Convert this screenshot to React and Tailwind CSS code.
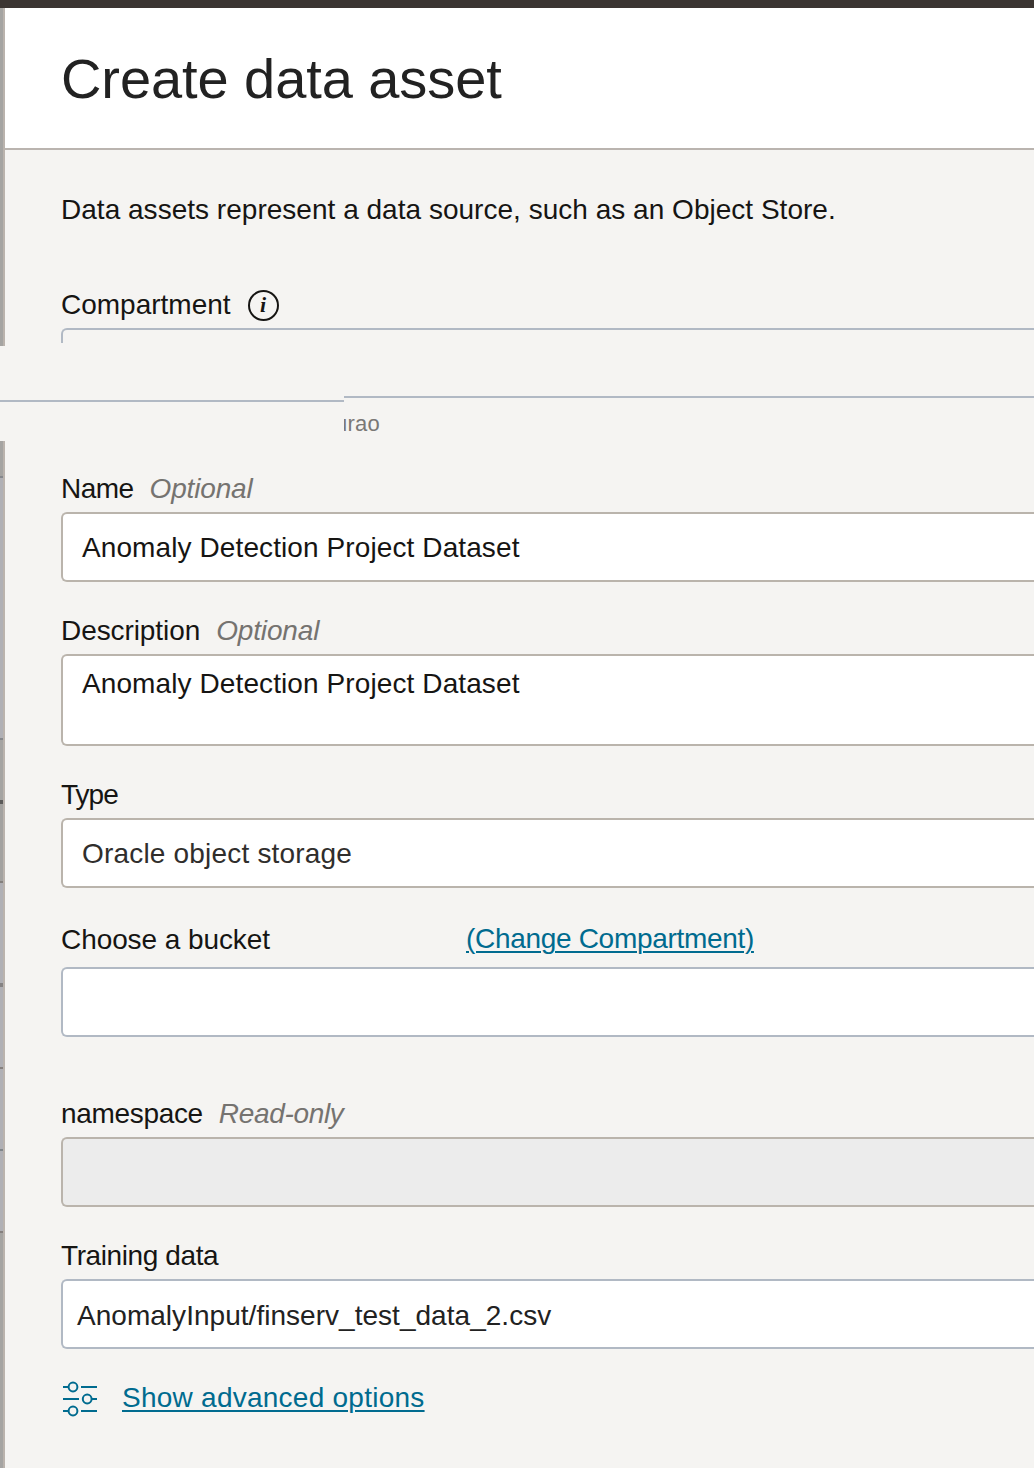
const STRIP_SEGMENTS = [
  [35, "bg-[#a5a4a2]"],
  [2, "bg-[#85878c]"],
  [260, "bg-[#b0b0b5]"],
  [2, "bg-[#85878c]"],
  [60, "bg-[#a5a4a2]"],
  [4, "bg-[#5c5b5a]"],
  [77, "bg-[#a3a2a0]"],
  [2, "bg-[#84807d]"],
  [100, "bg-[#b0b0b5]"],
  [4, "bg-[#858384]"],
  [80, "bg-[#b0b0b5]"],
  [2, "bg-[#85807e]"],
  [80, "bg-[#b0b0b5]"],
  [2, "bg-[#80868a]"],
  [80, "bg-[#b0b0b5]"],
  [2, "bg-[#85807e]"],
  [235, "bg-[#a5a4a2]"],
];

function EdgeStrip({ segments }) {
  return (
    <div className="w-[5px] shrink-0 border-r-2 border-[#bab3ad] bg-[#a5a4a2]">
      {segments?.map(([height, color], i) => (
        <div key={i} className={color} style={{ height }} />
      ))}
    </div>
  );
}

function Label({ children, hint, spacing = "", hintSpacing = "tracking-[-0.15px]" }) {
  return (
    <div className="flex h-8 items-center gap-4 leading-8">
      <span className={spacing}>{children}</span>
      {hint && <span className={`italic text-[#757370] ${hintSpacing}`}>{hint}</span>}
    </div>
  );
}

function Field({ className = "", children }) {
  return (
    <div className={`mt-[7px] rounded-l-md border-2 border-r-0 leading-8 ${className}`}>{children}</div>
  );
}

function SlidersIcon() {
  return (
    <svg width="36" height="36" viewBox="0 0 36 36" fill="none" stroke="#006b8f" strokeWidth="2">
      <path d="M1 6h5M19 6h16M1 18h16M30 18h5M1 30h5M19 30h16" />
      <circle cx="11" cy="6" r="4.4" />
      <circle cx="25.2" cy="18" r="4.4" />
      <circle cx="11" cy="30" r="4.4" />
    </svg>
  );
}

export default function App() {
  return (
    <div className="h-[1468px] w-[1034px] overflow-hidden bg-[#f5f4f2] font-['Liberation_Sans',Arial,sans-serif] text-[28px] text-[#161513]">
      <div className="h-2 bg-[#3b3532]" />

      <div className="flex h-[338px]">
        <EdgeStrip />
        <div className="flex-1">
          <header className="h-[142px] border-b-2 border-[#bab4af] bg-white pt-[39px] pl-14">
            <h1 className="text-[56px] leading-[64px] tracking-[-0.08px] text-[#222]">Create data asset</h1>
          </header>
          <div className="pt-[44px] pl-14">
            <p className="leading-8 tracking-[0.02px] whitespace-nowrap">
              Data assets represent a data source, such as an Object Store.
            </p>
            <div className="mt-[63px] flex h-8 items-center gap-[17px] leading-8">
              <span>Compartment</span>
              <span className="flex size-[31px] items-center justify-center rounded-full border-2 border-[#161513] font-['Liberation_Serif',serif] text-[22px] leading-none font-bold italic">
                i
              </span>
            </div>
            <div className="mt-[7px] h-[15px] rounded-tl-md border-t-2 border-l-2 border-[#b1b9c4]" />
          </div>
        </div>
      </div>

      <div className="flex h-[95px]">
        <div className="h-14 w-[344px] border-b-2 border-[#b1b9c4]" />
        <div className="flex-1 pt-[50px]">
          <div className="border-t-2 border-[#b1b9c4]" />
          <div className="mt-[13px] overflow-hidden text-[22px] leading-[26px] tracking-[0.2px] text-[#7a7876]">
            <span className="-ml-[9px]">urao</span>
          </div>
        </div>
      </div>

      <div className="flex h-[1027px]">
        <EdgeStrip segments={STRIP_SEGMENTS} />
        <form className="flex-1 pt-8 pl-14">
          <Label hint="Optional" spacing="tracking-[-0.55px]">Name</Label>
          <Field className="h-[70px] border-[#bab4ac] bg-white pt-[18px] pl-[19px] tracking-[0.1px]">
            Anomaly Detection Project Dataset
          </Field>

          <div className="mt-[33px]">
            <Label hint="Optional" spacing="tracking-[-0.08px]">Description</Label>
            <Field className="h-[92px] border-[#bab4ac] bg-white pt-3 pl-[19px] tracking-[0.1px]">
              Anomaly Detection Project Dataset
            </Field>
          </div>

          <div className="mt-[33px]">
            <Label spacing="tracking-[-1px]">Type</Label>
            <Field className="h-[70px] border-[#bab4ac] bg-white pt-[18px] pl-[19px] tracking-[0.19px] text-[#302e2c]">
              Oracle object storage
            </Field>
          </div>

          <div className="mt-[36px]">
            <div className="flex h-9 leading-8">
              <span className="w-[405px] tracking-[-0.08px]">Choose a bucket</span>
              <a className="-mt-px tracking-[-0.31px] text-[#006b8f] underline decoration-2 underline-offset-[3px]">
                (Change Compartment)
              </a>
            </div>
            <Field className="h-[70px] border-[#b1b9c4] bg-white" />
          </div>

          <div className="mt-[61px]">
            <Label hint="Read-only" spacing="tracking-[-0.33px]" hintSpacing="tracking-[-0.33px]">
              namespace
            </Label>
            <Field className="h-[70px] border-[#bab4ac] bg-[#ececec]" />
          </div>

          <div className="mt-[33px]">
            <Label spacing="tracking-[-0.4px]">Training data</Label>
            <Field className="h-[70px] border-[#b1b9c4] bg-white pt-[19px] pl-[14px] tracking-[0.03px] text-[#222]">
              AnomalyInput/finserv_test_data_2.csv
            </Field>
          </div>

          <div className="mt-8 flex items-center gap-6 pl-px">
            <SlidersIcon />
            <a className="-mt-0.5 leading-8 tracking-[0.25px] text-[#006b8f] underline decoration-2 underline-offset-[3px]">
              Show advanced options
            </a>
          </div>
        </form>
      </div>
    </div>
  );
}
